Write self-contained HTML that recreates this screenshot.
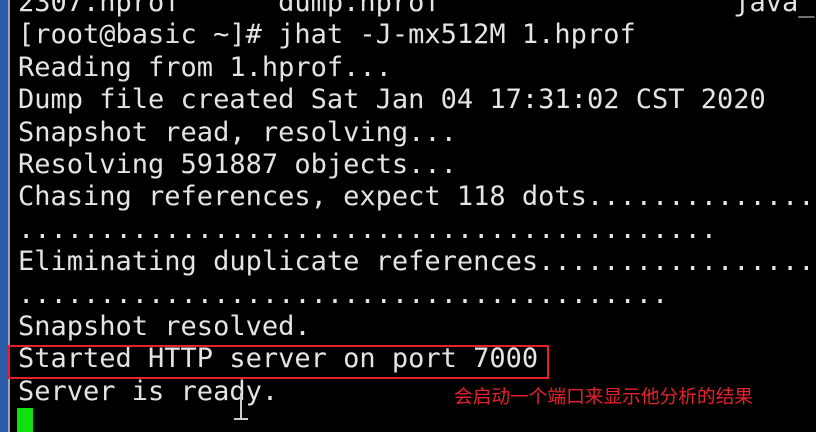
<!DOCTYPE html>
<html><head><meta charset="utf-8"><style>
html,body{margin:0;padding:0;width:816px;height:432px;overflow:hidden;background:#000;}
.strip{position:absolute;left:0;top:0;width:8px;height:432px;background:#2a5aa8;}
.edge{position:absolute;left:8px;top:0;width:2px;height:432px;background:#9aa6b8;}
.term{position:absolute;left:18px;top:-13px;margin:0;font-family:"DejaVu Sans Mono","Liberation Mono",monospace;font-size:27px;line-height:32.4px;color:#e4e4e4;white-space:pre;width:798px;overflow:hidden;}
.box{position:absolute;left:8px;top:345px;width:537px;height:30px;border:2px solid #e8202a;}
.cap{position:absolute;left:454px;top:384px;font-family:"Noto Sans CJK SC",sans-serif;font-size:18.7px;line-height:24px;color:#e8202a;white-space:nowrap;}
.cur{position:absolute;left:17px;top:408px;width:16px;height:24px;background:#10e010;}
.ib{position:absolute;left:240px;top:393px;width:2px;height:26px;background:#ccc;}
.ib2{position:absolute;left:234px;top:418px;width:14px;height:2px;background:#ccc;}
</style></head><body>
<div class="strip"></div><div class="edge"></div>
<pre class="term">2307.hprof      dump.hprof                  java_
[root@basic ~]# jhat -J-mx512M 1.hprof
Reading from 1.hprof...
Dump file created Sat Jan 04 17:31:02 CST 2020
Snapshot read, resolving...
Resolving 591887 objects...
Chasing references, expect 118 dots..................
...........................................
Eliminating duplicate references.....................
........................................
Snapshot resolved.
Started HTTP server on port 7000
Server is ready.</pre>
<div class="box"></div>
<div class="cap">会启动一个端口来显示他分析的结果</div>
<div class="cur"></div>
<div class="ib"></div><div class="ib2"></div>
</body></html>
